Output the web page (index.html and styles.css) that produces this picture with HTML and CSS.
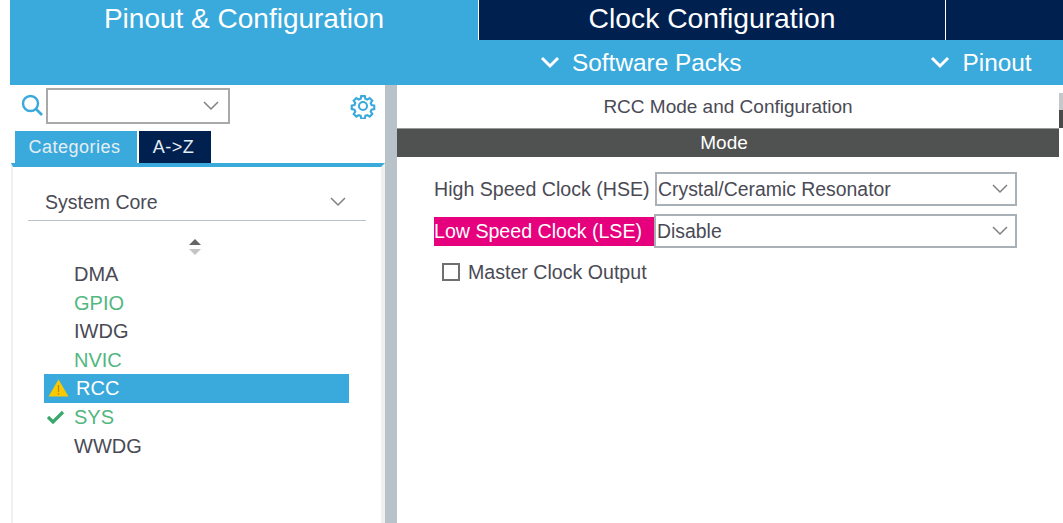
FILE: index.html
```html
<!DOCTYPE html>
<html lang="en">
<head>
    <meta charset="UTF-8">
    <title>Pinout &amp; Configuration</title>
    <link rel="stylesheet" href="styles.css">
</head>
<body>
    <header>
        <nav class="tabs">
            <a class="tab active">Pinout &amp; Configuration</a>
            <a class="tab">Clock Configuration</a>
            <span class="tab-rest"></span>
        </nav>
        <div class="subbar">
            <a class="sub-item packs">
                <svg width="20" height="13" viewBox="0 0 20 13"><path d="M2 2l8 8 8-8" fill="none" stroke="#fff" stroke-width="3"/></svg>
                Software Packs
            </a>
            <a class="sub-item pinout">
                <svg width="20" height="13" viewBox="0 0 20 13"><path d="M2 2l8 8 8-8" fill="none" stroke="#fff" stroke-width="3"/></svg>
                Pinout
            </a>
        </div>
    </header>

    <main>
        <aside class="sidebar">
            <div class="search-row">
                <svg class="search-icon" width="23" height="23" viewBox="0 0 23 23"><circle cx="9.500" cy="9.500" r="7.500" fill="none" stroke="#3aa9dc" stroke-width="2.400"/><path d="M15 15l6 6" stroke="#3aa9dc" stroke-width="2.600"/></svg>
                <div class="search-box">
                    <svg width="16" height="10" viewBox="0 0 16 10"><path d="M1 1l7 7 7-7" fill="none" stroke="#808080" stroke-width="1.500"/></svg>
                </div>
                <svg class="gear" width="26" height="26" viewBox="0 0 26 26"><path d="M11 2h4l.6 3 2.200.9 2.600-1.700 2.900 2.900-1.700 2.600.9 2.200 3 .6v4l-3 .6-.9 2.200 1.700 2.600-2.900 2.900-2.600-1.700-2.200.9-.6 3h-4l-.6-3-2.200-.9-2.600 1.700-2.900-2.900 1.700-2.600-.9-2.200-3-.6v-4l3-.6.9-2.200-1.700-2.600 2.900-2.900 2.600 1.700 2.200-.9z" transform="translate(1.300 1.300) scale(.9)" fill="none" stroke="#3aa9dc" stroke-width="2.400"/><circle cx="13" cy="13" r="4" fill="none" stroke="#3aa9dc" stroke-width="2"/></svg>
            </div>
            <div class="side-tabs">
                <a class="side-tab on">Categories</a>
                <a class="side-tab">A-&gt;Z</a>
            </div>
            <div class="side-panel">
                <div class="group-head">
                    <span>System Core</span>
                    <svg width="16" height="10" viewBox="0 0 16 10"><path d="M1 1l7 7 7-7" fill="none" stroke="#808080" stroke-width="1.500"/></svg>
                </div>
                <div class="sorter">
                    <svg width="14" height="18" viewBox="0 0 14 18"><path d="M7 1l6 6H1z" fill="#666"/><path d="M7 17l6-6H1z" fill="#c4c4c4"/></svg>
                </div>
                <ul class="items">
                    <li>DMA</li>
                    <li class="ok">GPIO</li>
                    <li>IWDG</li>
                    <li class="ok">NVIC</li>
                    <li class="selected">
                        <svg class="mark" width="21" height="18" viewBox="0 0 21 18"><path d="M10.500 .5L20.500 17.500H.5z" fill="#fbc900"/><path d="M10.500 6v7" stroke="#b98a10" stroke-width="1.300"/><path d="M10.500 14.200v1.600" stroke="#b98a10" stroke-width="1.300"/></svg>
                        RCC
                    </li>
                    <li class="ok">
                        <svg class="mark tick" width="19" height="14" viewBox="0 0 19 14"><path d="M2 7l5 5 10-10" fill="none" stroke="#3aa76d" stroke-width="3.200"/></svg>
                        SYS
                    </li>
                    <li>WWDG</li>
                </ul>
            </div>
        </aside>

        <section class="content">
            <h2>RCC Mode and Configuration</h2>
            <div class="mode-bar">Mode</div>
            <div class="form">
                <div class="form-row first">
                    <label>High Speed Clock (HSE)</label>
                    <div class="combo">
                        <span>Crystal/Ceramic Resonator</span>
                        <svg width="16" height="10" viewBox="0 0 16 10"><path d="M1 1l7 7 7-7" fill="none" stroke="#808080" stroke-width="1.500"/></svg>
                    </div>
                </div>
                <div class="form-row">
                    <label class="warn">Low Speed Clock (LSE)</label>
                    <div class="combo">
                        <span>Disable</span>
                        <svg width="16" height="10" viewBox="0 0 16 10"><path d="M1 1l7 7 7-7" fill="none" stroke="#808080" stroke-width="1.500"/></svg>
                    </div>
                </div>
                <div class="check-row">
                    <span class="checkbox"></span>
                    <span>Master Clock Output</span>
                </div>
            </div>
        </section>

        <div class="scrollbar"><span class="thumb"></span></div>
    </main>
</body>
</html>
```

FILE: styles.css
```css
* {
    box-sizing: border-box;
}
html, body {
    height: 100%;
}
body {
    margin: 0;
    font-family: "Liberation Sans", Arial, sans-serif;
    color: #4a4a55;
    background: white;
    overflow: hidden;
}
header {
    margin-left: 10px;
    height: 85px;
    background: #3aa9dc;
    color: white;
}
.tabs {
    display: flex;
    height: 40px;
    background: #002150;
}
.tab {
    display: flex;
    align-items: center;
    justify-content: center;
    padding-bottom: 3px;
    width: 468px;
    font-size: 28px;
}
.tab + .tab {
    width: 468px;
    font-size: 28.300px;
    border-left: 1px solid white;
    border-right: 1px solid white;
}
.tab.active {
    background: #3aa9dc;
}
.tab-rest {
    flex: 1;
}
.subbar {
    display: flex;
    height: 45px;
    align-items: center;
    font-size: 24.400px;
}
.sub-item {
    display: flex;
    align-items: center;
    gap: 12px;
    white-space: nowrap;
}
.packs {
    margin-left: 530px;
}
.pinout {
    margin-left: 189px;
}
main {
    display: flex;
    height: 438px;
}
.sidebar {
    width: 385px;
    flex: none;
    padding-left: 11px;
}
.search-row {
    display: flex;
    align-items: center;
    height: 46px;
    padding: 0 0 5px 10px;
}
.search-icon {
    margin-right: 2px;
}
.search-box {
    width: 184px;
    height: 36px;
    border: 2px solid #a9a9a9;
    display: flex;
    align-items: center;
    justify-content: flex-end;
    padding-right: 9px;
}
.gear {
    margin-left: 120px;
}
.side-tabs {
    display: flex;
    gap: 2px;
    margin-left: 3px;
    height: 32px;
}
.side-tab {
    width: 72px;
    display: flex;
    align-items: center;
    justify-content: center;
    padding-right: 3px;
    background: #002150;
    color: #e6eef5;
    font-size: 18px;
    letter-spacing: .5px;
}
.side-tab.on {
    width: 122px;
    margin-left: 1px;
    padding-right: 3px;
    background: #3aa9dc;
}
.side-panel {
    height: 360px;
    border-top: 4px solid #3aa9dc;
    border-left: 2px solid #f0f0f0;
    border-right: 4px solid #f0f0f0;
    padding: 0 15px;
}
.group-head {
    height: 54px;
    padding: 17px 20px 0 17px;
    border-bottom: 1px solid #b8c3c9;
    display: flex;
    align-items: center;
    justify-content: space-between;
    font-size: 19.500px;
}
.sorter {
    display: flex;
    justify-content: center;
    padding: 17px 4px 0 0;
    height: 39px;
}
.items {
    list-style: none;
    margin: 0 0 0 16px;
    padding: 0;
    width: 305px;
    font-size: 20px;
}
.items li {
    position: relative;
    height: 28.600px;
    line-height: 28px;
    padding-left: 30px;
}
.items .ok {
    color: #53b77f;
}
.items .selected {
    background: #3aa9dc;
    color: white;
    padding-left: 32px;
}
.mark {
    position: absolute;
    left: 4px;
    top: 5px;
}
.mark.tick {
    left: 2px;
    top: 7px;
}
.content {
    margin-left: 12px;
    width: 662px;
    flex: none;
}
/* grey divider between the two panes */
main::before {
    content: "";
    position: absolute;
    left: 385px;
    top: 85px;
    bottom: 0;
    width: 12px;
    background: #b8c3c9;
}
h2 {
    margin: 0;
    height: 43px;
    line-height: 44px;
    text-align: center;
    font-weight: normal;
    font-size: 19px;
}
.mode-bar {
    height: 29px;
    line-height: 28px;
    background: #505251;
    border-top: 1px solid #9a9a9a;
    color: white;
    text-align: center;
    font-size: 19px;
    padding-right: 8px;
}
.form {
    padding: 15px 42px 0 37px;
    font-size: 19.600px;
}
.form-row {
    display: flex;
    align-items: center;
    height: 34px;
    margin-bottom: 8px;
}
.form-row label {
    width: 220px;
    flex: none;
    line-height: 29px;
    white-space: nowrap;
}
.form-row.first label {
    width: 221px;
}
.warn {
    background: #e6007e;
    color: white;
}
.combo {
    flex: 1;
    height: 34px;
    border: 2px solid #a9b0b6;
    display: flex;
    align-items: center;
    justify-content: space-between;
    padding: 0 7px 0 1px;
    font-size: 19.400px;
}
.check-row {
    display: flex;
    align-items: center;
    gap: 8px;
    margin: 13px 0 0 8px;
}
.checkbox {
    width: 18px;
    height: 18px;
    margin-top: -2px;
    border: 2px solid #6f6f6f;
}
.scrollbar {
    flex: 1;
    position: relative;
}
.thumb {
    position: absolute;
    left: 0;
    right: 0;
    top: 8px;
    height: 35px;
    background: linear-gradient(#c4c8ca 50%, #4a4a4a 50%);
}
```
